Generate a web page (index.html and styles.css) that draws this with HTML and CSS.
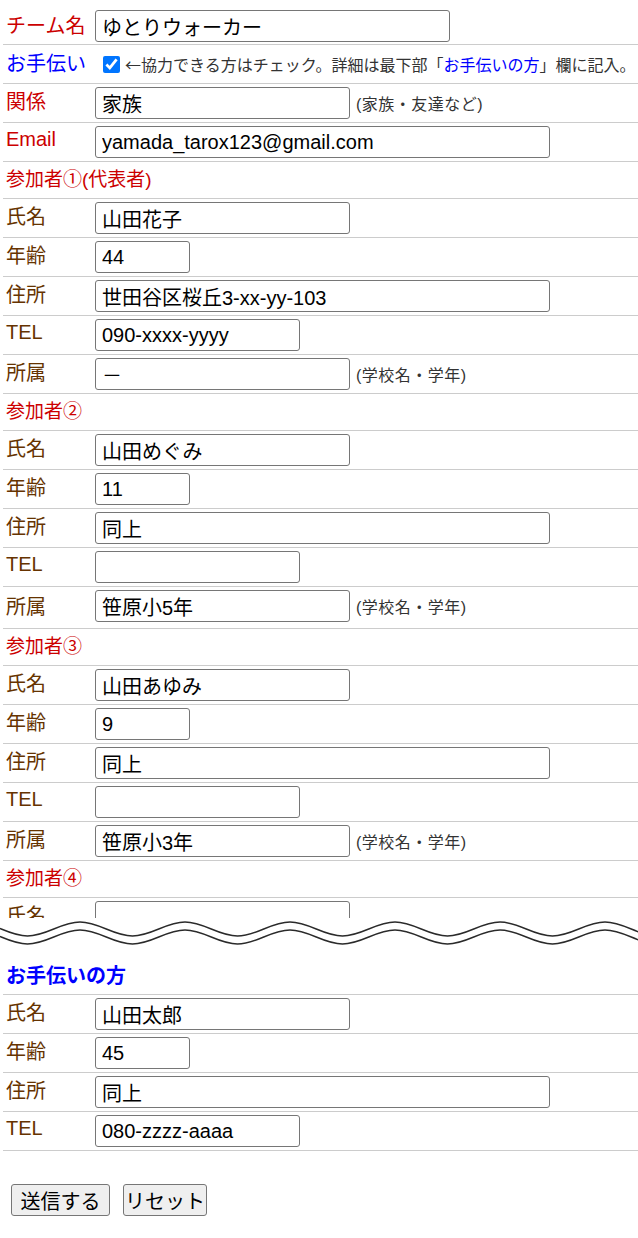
FILE: index.html
```html
<!DOCTYPE html>
<html lang="ja">
<head>
<meta charset="utf-8">
<title>エントリーフォーム</title>
<link rel="stylesheet" href="styles.css">
</head>
<body>
<form class="entry">
  <table class="tbl">
    <tr class="r-top">
      <td class="lbl lbl-red">チーム名</td>
      <td><div class="fld"><input class="txt w-team" type="text" value="ゆとりウォーカー"></div></td>
    </tr>
    <tr class="r-help">
      <td class="lbl lbl-blue">お手伝い</td>
      <td><div class="chk-line"><input class="chk" type="checkbox" checked><span class="chk-note"><span class="arrow">←</span>協力できる方はチェック。詳細は最下部「<span class="blue">お手伝いの方</span>」欄に記入。</span></div></td>
    </tr>
    <tr>
      <td class="lbl lbl-red">関係</td>
      <td><div class="fld"><input class="txt w-l" type="text" value="家族"><span class="note">(家族・友達など)</span></div></td>
    </tr>
    <tr>
      <td class="lbl lbl-red">Email</td>
      <td><div class="fld"><input class="txt w-xl" type="text" value="yamada_tarox123@gmail.com"></div></td>
    </tr>

    <tr class="r-head"><td colspan="2"><div class="head">参加者①(代表者)</div></td></tr>
    <tr><td class="lbl">氏名</td><td><div class="fld"><input class="txt w-l" type="text" value="山田花子"></div></td></tr>
    <tr><td class="lbl">年齢</td><td><div class="fld"><input class="txt w-s" type="text" value="44"></div></td></tr>
    <tr><td class="lbl">住所</td><td><div class="fld"><input class="txt w-xl" type="text" value="世田谷区桜丘3-xx-yy-103"></div></td></tr>
    <tr><td class="lbl">TEL</td><td><div class="fld"><input class="txt w-m" type="text" value="090-xxxx-yyyy"></div></td></tr>
    <tr><td class="lbl">所属</td><td><div class="fld"><input class="txt w-l" type="text" value="－"><span class="note">(学校名・学年)</span></div></td></tr>

    <tr class="r-head"><td colspan="2"><div class="head">参加者②</div></td></tr>
    <tr><td class="lbl">氏名</td><td><div class="fld"><input class="txt w-l" type="text" value="山田めぐみ"></div></td></tr>
    <tr><td class="lbl">年齢</td><td><div class="fld"><input class="txt w-s" type="text" value="11"></div></td></tr>
    <tr><td class="lbl">住所</td><td><div class="fld"><input class="txt w-xl" type="text" value="同上"></div></td></tr>
    <tr><td class="lbl">TEL</td><td><div class="fld"><input class="txt w-m" type="text" value=""></div></td></tr>
    <tr class="r-extra"><td class="lbl">所属</td><td><div class="fld"><input class="txt w-l" type="text" value="笹原小5年"><span class="note">(学校名・学年)</span></div></td></tr>

    <tr class="r-head"><td colspan="2"><div class="head">参加者③</div></td></tr>
    <tr><td class="lbl">氏名</td><td><div class="fld"><input class="txt w-l" type="text" value="山田あゆみ"></div></td></tr>
    <tr><td class="lbl">年齢</td><td><div class="fld"><input class="txt w-s" type="text" value="9"></div></td></tr>
    <tr><td class="lbl">住所</td><td><div class="fld"><input class="txt w-xl" type="text" value="同上"></div></td></tr>
    <tr><td class="lbl">TEL</td><td><div class="fld"><input class="txt w-m" type="text" value=""></div></td></tr>
    <tr><td class="lbl">所属</td><td><div class="fld"><input class="txt w-l" type="text" value="笹原小3年"><span class="note">(学校名・学年)</span></div></td></tr>
  </table>

  <div class="cut">
    <table class="tbl">
      <tr class="r-head"><td colspan="2"><div class="head">参加者④</div></td></tr>
      <tr><td class="lbl">氏名</td><td><div class="fld"><input class="txt w-l" type="text" value=""></div></td></tr>
    </table>
  </div>

  <svg class="wave" width="638" height="30" viewBox="0 0 638 30" aria-hidden="true">
    <path d="M-25 4 C-6 4 8.5 18 27.5 18 S61 4 80 4 S113.5 18 132.5 18 S166 4 185 4 S218.5 18 237.5 18 S271 4 290 4 S323.5 18 342.5 18 S376 4 395 4 S428.5 18 447.5 18 S481 4 500 4 S533.5 18 552.5 18 S586 4 605 4 S638.5 18 657.5 18 S691 4 710 4" fill="none" stroke="#2a2a2a" stroke-width="1.4"/>
    <path transform="translate(0 8)" d="M-25 4 C-6 4 8.5 18 27.5 18 S61 4 80 4 S113.5 18 132.5 18 S166 4 185 4 S218.5 18 237.5 18 S271 4 290 4 S323.5 18 342.5 18 S376 4 395 4 S428.5 18 447.5 18 S481 4 500 4 S533.5 18 552.5 18 S586 4 605 4 S638.5 18 657.5 18 S691 4 710 4" fill="none" stroke="#2a2a2a" stroke-width="1.4"/>
  </svg>

  <table class="tbl helper">
    <tr class="r-head"><td colspan="2"><div class="head head-blue">お手伝いの方</div></td></tr>
    <tr><td class="lbl">氏名</td><td><div class="fld"><input class="txt w-l" type="text" value="山田太郎"></div></td></tr>
    <tr><td class="lbl">年齢</td><td><div class="fld"><input class="txt w-s" type="text" value="45"></div></td></tr>
    <tr><td class="lbl">住所</td><td><div class="fld"><input class="txt w-xl" type="text" value="同上"></div></td></tr>
    <tr><td class="lbl">TEL</td><td><div class="fld"><input class="txt w-m" type="text" value="080-zzzz-aaaa"></div></td></tr>
  </table>

  <div class="btns">
    <button class="btn b-send" type="button">送信する</button>
    <button class="btn b-reset" type="reset">リセット</button>
  </div>
</form>
</body>
</html>
```

FILE: styles.css
```css
html, body {
  margin: 0;
  padding: 0;
  background: #fff;
}

body {
  font-family: "Liberation Sans", "Noto Sans CJK JP", sans-serif;
  color: #000;
}

.entry {
  padding-left: 3px;
  width: 635px;
}

.tbl {
  width: 635px;
  border-collapse: collapse;
}

.tbl td {
  border-bottom: 1px solid #cccccc;
  padding: 3px 0;
  vertical-align: middle;
}

.tbl td.lbl {
  width: 89px;
  padding-left: 3px;
  padding-top: 0;
  padding-bottom: 5px;
  font-size: 20px;
  color: #663300;
  white-space: nowrap;
}

.tbl td.lbl-red {
  color: #cc0000;
}

.tbl td.lbl-blue {
  color: #0000ff;
}

.blue {
  color: #0000ff;
}

.fld {
  display: flex;
  align-items: center;
  height: 32px;
}

.txt {
  box-sizing: border-box;
  height: 32px;
  margin: 0;
  padding: 0 6px;
  border: 1px solid #767676;
  border-radius: 3px;
  background: #fff;
  color: #000;
  font-family: "Liberation Sans", "Noto Sans CJK JP", sans-serif;
  font-size: 20px;
}

.w-team { width: 355px; }
.w-xl { width: 455px; }
.w-l { width: 255px; }
.w-m { width: 205px; }
.w-s { width: 95px; }

.note {
  margin-left: 6px;
  font-size: 16px;
  color: #333;
  white-space: nowrap;
  letter-spacing: 0.5px;
}

.r-top td {
  padding-top: 10px;
  padding-bottom: 2px;
}

.tbl tr.r-top td.lbl {
  padding-top: 8px;
  padding-bottom: 4px;
}

.r-help td {
  padding-top: 0;
  padding-bottom: 0;
}

.tbl tr.r-help td.lbl {
  padding-top: 0;
  padding-bottom: 4px;
}

.chk-line {
  display: flex;
  align-items: center;
  height: 38px;
  white-space: nowrap;
}

.chk {
  width: 17px;
  height: 17px;
  margin: 0 5px 0 8px;
}

.chk-note {
  font-size: 16px;
  color: #333;
}

.arrow {
  font-family: "Noto Sans CJK JP", sans-serif;
}

.r-extra td {
  padding-bottom: 6px;
}

.tbl tr.r-head td {
  padding: 0 3px;
}

.head {
  height: 36px;
  line-height: 36px;
  font-size: 19px;
  color: #cc0000;
  white-space: nowrap;
}

.head-blue {
  color: #0000ff;
  font-weight: bold;
  font-size: 20px;
}

.cut {
  height: 57px;
  overflow: hidden;
}

.wave {
  display: block;
  margin-left: -3px;
}

.helper {
  margin-top: 10px;
}

.btns {
  display: flex;
  gap: 13px;
  padding: 33px 0 0 8px;
}

.btn {
  box-sizing: border-box;
  height: 32px;
  margin: 0;
  padding: 0;
  border: 1px solid #767676;
  border-radius: 3px;
  background: #efefef;
  color: #000;
  font-family: "Liberation Sans", "Noto Sans CJK JP", sans-serif;
  font-size: 20px;
}

.b-send { width: 99px; }
.b-reset { width: 84px; }
```
